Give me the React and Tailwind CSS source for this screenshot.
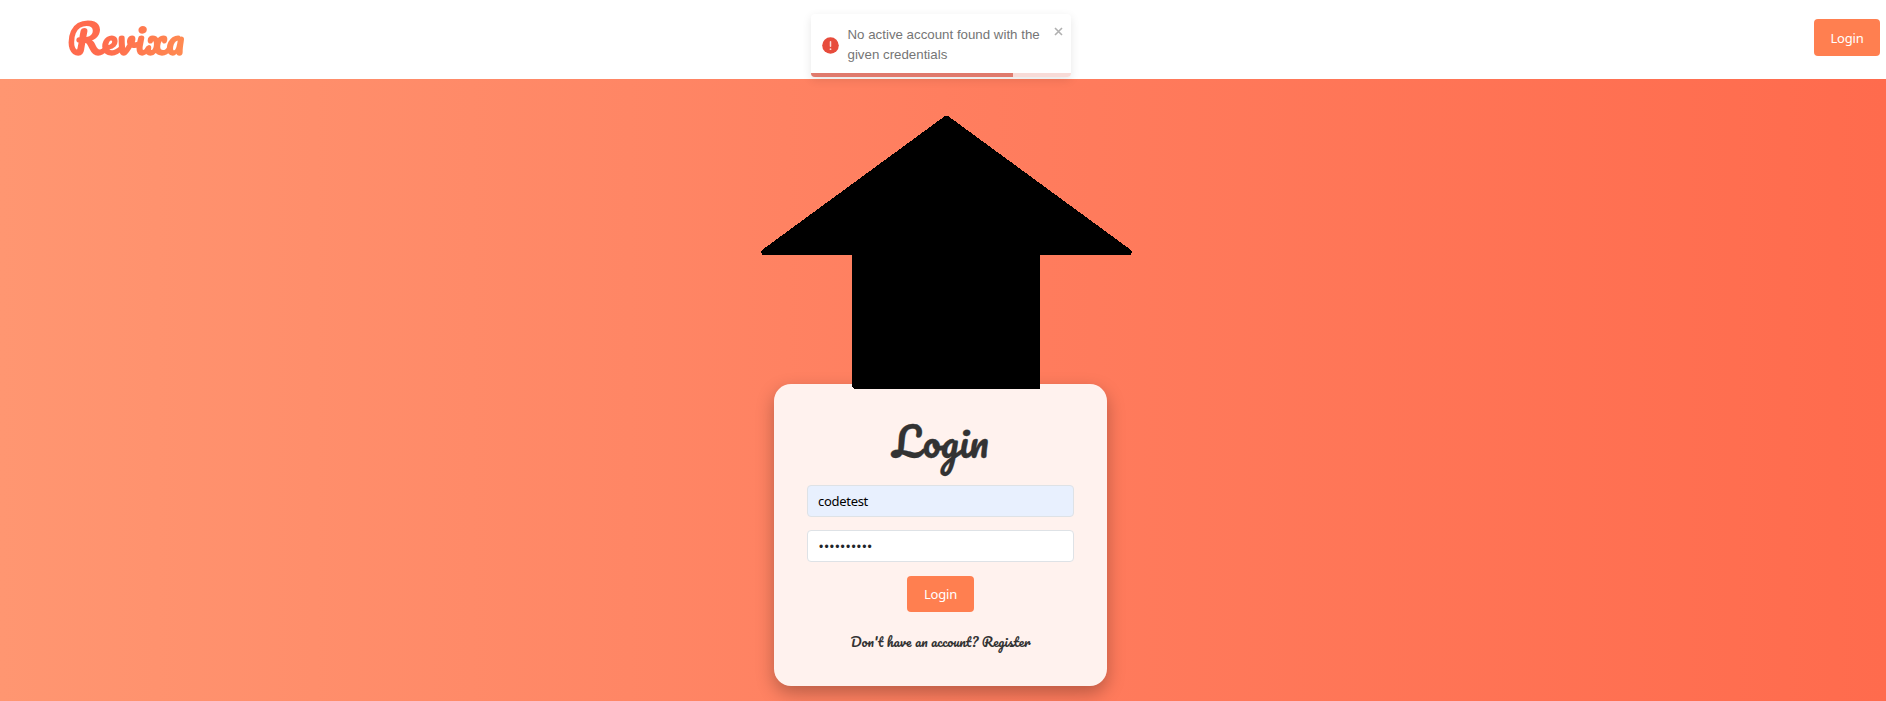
function Header() {
  return (
    <header className="flex h-[79px] items-center justify-between bg-white pr-[6px] pl-[62px]">
      <a className="-mt-[3px] inline-block bg-[linear-gradient(100deg,#ff6b4d_35%,#ff8c52)] bg-clip-text pl-[5px] font-['Pacifico',cursive] text-[40px] leading-[60px] font-bold text-transparent">
        Revixa
      </a>
      <button className="mb-1 h-[37px] w-[66px] rounded-[4px] bg-[#ff7f50] pt-[3px] font-['Segoe_UI','Noto_Sans',sans-serif] text-[13px] tracking-[-0.2px] text-white">
        Login
      </button>
    </header>
  );
}

function Toast() {
  return (
    <div className="absolute top-[14px] left-[811px] h-[63px] w-[260px] overflow-hidden rounded-[4px] bg-white shadow-[0_3px_10px_rgba(0,0,0,0.1)]">
      <div className="flex pt-[11px] pl-[10.5px]">
        <svg className="mt-[12px] size-[17px] shrink-0" viewBox="0 0 17 17">
          <circle cx="8.5" cy="8.5" r="8.3" fill="#e74c3c" />
          <path d="M8.5 4.7v4.6" stroke="#fadbd7" strokeWidth="1.5" strokeLinecap="round" />
          <circle cx="8.5" cy="12.2" r="0.9" fill="#fadbd7" />
        </svg>
        <p className="ml-[9px] w-[200px] shrink-0 font-['Liberation_Sans',sans-serif] text-[13.3px] leading-5 whitespace-nowrap text-[#757575]">
          No active account found with the
          <br />
          given credentials
        </p>
        <svg className="mt-[1.5px] ml-[6px] size-[9px] shrink-0" viewBox="0 0 9 9">
          <path d="M1 1l7 7M8 1L1 8" stroke="#b0b0b0" strokeWidth="1.6" />
        </svg>
      </div>
      <div className="absolute bottom-0 left-0 h-1 w-full bg-[#f8dbd7]">
        <div className="h-full w-[202px] bg-[#e07a6d]" />
      </div>
    </div>
  );
}

function LoginCard() {
  return (
    <form className="flex h-[302px] w-[333px] flex-col items-center rounded-[17px] bg-[#fff2ee] px-[33px] shadow-[0_7px_18px_rgba(0,0,0,0.28)]">
      <h1 className="mt-[27px] h-[74px] font-['Pacifico',cursive] text-[40px] leading-[60px] font-normal text-[#333] [-webkit-text-stroke:0.3px_#333]">
        Login
      </h1>
      <div className="flex h-8 w-[267px] shrink-0 items-center rounded-[4px] border border-[#dee2e6] bg-[#e8f0fe] px-[10px] pt-[2px] font-['Segoe_UI','Noto_Sans',sans-serif] text-[13px] tracking-[-0.3px] text-black">
        codetest
      </div>
      <div className="mt-[13px] flex h-8 w-[267px] shrink-0 items-center rounded-[4px] border border-[#dee2e6] bg-white px-[11px] pt-[2px] font-['Liberation_Sans',sans-serif] text-[12px] tracking-[1.2px] text-[#212529]">
        ••••••••••
      </div>
      <button type="button" className="mt-[14px] h-9 w-[67px] shrink-0 rounded-[4px] bg-[#ff7f50] pt-[2px] font-['Segoe_UI','Noto_Sans',sans-serif] text-[13px] tracking-[-0.2px] text-white">
        Login
      </button>
      <p className="mt-[18px] font-['Pacifico',cursive] text-[13.3px] leading-6 whitespace-nowrap text-[#333]">
        Don't have an account? Register
      </p>
    </form>
  );
}

export default function App() {
  return (
    <div className="relative h-[701px] w-full overflow-hidden">
      <Header />
      <main className="relative flex h-[622px] justify-center bg-[linear-gradient(90deg,#ff9671,#ff7e5f,#ff6b4d)] pt-[305px] pr-[5px]">
        <LoginCard />
        <svg className="absolute top-[36px] left-[761px] h-[274px] w-[372px]" viewBox="0 0 372 274" shapeRendering="crispEdges">
          <path d="M184 1Q185.5 0 187 1L370 135Q372 138 369 140H279V274H93L91 272V140H2Q-1 138 1 135Z" fill="#000" />
        </svg>
      </main>
      <Toast />
    </div>
  );
}
